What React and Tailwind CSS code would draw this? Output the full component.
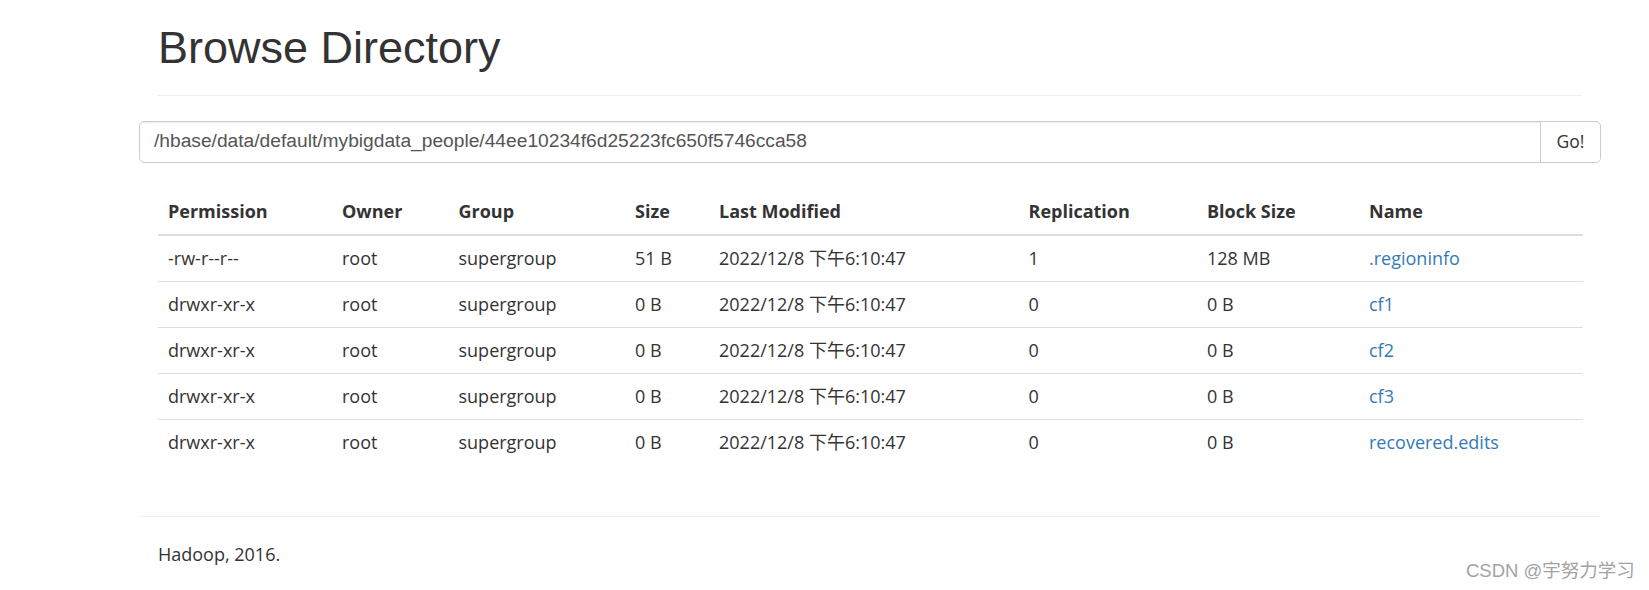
import React from "react";

const rows = [
  ["-rw-r--r--", "root", "supergroup", "51 B", "2022/12/8 下午6:10:47", "1", "128 MB", ".regioninfo"],
  ["drwxr-xr-x", "root", "supergroup", "0 B", "2022/12/8 下午6:10:47", "0", "0 B", "cf1"],
  ["drwxr-xr-x", "root", "supergroup", "0 B", "2022/12/8 下午6:10:47", "0", "0 B", "cf2"],
  ["drwxr-xr-x", "root", "supergroup", "0 B", "2022/12/8 下午6:10:47", "0", "0 B", "cf3"],
  ["drwxr-xr-x", "root", "supergroup", "0 B", "2022/12/8 下午6:10:47", "0", "0 B", "recovered.edits"],
];

const headers = ["Permission", "Owner", "Group", "Size", "Last Modified", "Replication", "Block Size", "Name"];
const widths = [174, 116.5, 176.5, 84, 309.5, 178.5, 162, 224];

export default function App() {
  return (
    <div className="relative w-[1649px] h-[590px] bg-white overflow-hidden text-[#333] [font-family:'Open_Sans','Noto_Sans_CJK_SC',sans-serif]">
      <div className="ml-[139px] w-[1462px]">
        <div className="px-[19px]">
          <div className="pb-[22px] border-b border-[#eee]">
            <h1 className="pt-[23px] text-[45px] leading-[49.5px] font-normal [font-family:'Liberation_Sans',Arial,sans-serif] text-[#333]">
              Browse Directory
            </h1>
          </div>
        </div>

        <div className="mt-[25px] flex h-[42px] border border-[#ccc] rounded-[5px] shadow-[inset_0_1px_1px_rgba(0,0,0,0.075)]">
          <div className="flex-1 flex items-center pl-[14px] text-[19.2px] text-[#555] [font-family:'Liberation_Sans',Arial,sans-serif]">
            /hbase/data/default/mybigdata_people/44ee10234f6d25223fc650f5746cca58
          </div>
          <div className="w-[60px] border-l border-[#ccc] flex items-center justify-center text-[17.5px] text-[#333] bg-white rounded-r-[5px]">
            Go!
          </div>
        </div>

        <div className="px-[19px] mt-[26px]">
          <table className="w-[1425px] table-fixed border-collapse text-[18px]">
            <colgroup>
              {widths.map((w, i) => (
                <col key={i} style={{ width: w + "px" }} />
              ))}
            </colgroup>
            <thead>
              <tr className="border-b-2 border-[#ddd]">
                {headers.map((h) => (
                  <th key={h} className="text-left font-bold px-[10px] py-[10px] leading-[25px]">
                    {h}
                  </th>
                ))}
              </tr>
            </thead>
            <tbody>
              {rows.map((r, i) => (
                <tr key={i} className={i === 0 ? "" : "border-t border-[#ddd]"}>
                  {r.map((c, j) => (
                    <td key={j} className="px-[10px] py-[10px] leading-[25px] whitespace-nowrap">
                      {j === 7 ? <span className="text-[#337ab7]">{c}</span> : c}
                    </td>
                  ))}
                </tr>
              ))}
            </tbody>
          </table>
        </div>

        <div className="mt-[51px] border-t border-[#eee]" />
        <p className="px-[19px] mt-[25px] text-[18px] leading-[25px]">Hadoop, 2016.</p>
      </div>

      <div className="absolute left-[1466px] top-[559px] text-[18.5px] leading-[24px] text-[#a3a3a3] [font-family:'Liberation_Sans','Noto_Sans_CJK_SC',sans-serif] whitespace-nowrap">
        CSDN @宇努力学习
      </div>
    </div>
  );
}
